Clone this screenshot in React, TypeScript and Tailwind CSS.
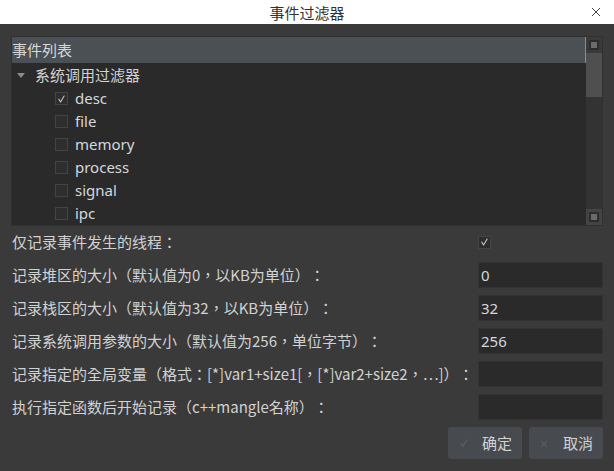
import React from 'react';

const font = { fontFamily: '"Noto Sans", "Noto Sans CJK TC", sans-serif' };
const cjkFont = { fontFamily: '"Noto Sans CJK TC", "Noto Sans", sans-serif' };

const events = [
  { name: 'desc', checked: true },
  { name: 'file', checked: false },
  { name: 'memory', checked: false },
  { name: 'process', checked: false },
  { name: 'signal', checked: false },
  { name: 'ipc', checked: false },
];

const fields = [
  { label: '记录堆区的大小（默认值为0，以KB为单位）：', value: '0' },
  { label: '记录栈区的大小（默认值为32，以KB为单位）：', value: '32' },
  { label: '记录系统调用参数的大小（默认值为256，单位字节）：', value: '256' },
  { label: '记录指定的全局变量（格式：[*]var1+size1[，[*]var2+size2，⋯]）：', value: '' },
  { label: '执行指定函数后开始记录（c++mangle名称）：', value: '' },
];

function CheckMark({ className }: { className?: string }) {
  return (
    <svg viewBox="0 0 13 13" className={className} fill="none">
      <path d="M3.2 6.6 L5.4 10 L9.6 3" stroke="currentColor" strokeWidth="1.2" strokeLinecap="round" strokeLinejoin="round" />
    </svg>
  );
}

function Checkbox({ checked }: { checked: boolean }) {
  return (
    <div className="w-[13px] h-[13px] bg-[#2e2e2e] border border-[#444] flex items-center justify-center text-[#cfcfcf]">
      {checked && <CheckMark className="w-[12px] h-[12px]" />}
    </div>
  );
}

function ScrollButton() {
  return (
    <div className="h-[16px] flex items-center justify-center">
      <div className="w-[10px] h-[10px] bg-[#2d2d2d] flex items-center justify-center">
        <div className="w-[6px] h-[6px] bg-[#6b6b6b]" />
      </div>
    </div>
  );
}

export default function App() {
  return (
    <div className="w-[614px] h-[471px] flex flex-col overflow-hidden [text-spacing-trim:space-all]" style={font}>
      {/* title bar */}
      <div className="h-[24px] bg-white grid grid-cols-[1fr_auto_1fr] items-center">
        <div />
        <div className="text-[15px] text-[#303030] leading-none" style={cjkFont}>事件过滤器</div>
        <div className="justify-self-end pr-[13px] text-[#444]">
          <svg viewBox="0 0 10 10" className="w-[10px] h-[10px]">
            <path d="M1 1 L9 9 M9 1 L1 9" stroke="currentColor" strokeWidth="1" />
          </svg>
        </div>
      </div>

      <div className="flex-1 bg-[#3a3a3a] px-[11px] pt-[12px] text-[#d2d2d2]">
        {/* event tree */}
        <div className="h-[190px] border border-[#303030] flex bg-[#2a2a2a]">
          <div className="flex-1 flex flex-col">
            <div className="h-[27px] bg-[#4b5054] border-r border-[#8a8d90] flex items-center text-[15px] text-[#d8d8d8]" style={cjkFont}>
              事件列表
            </div>
            <div className="pt-[1px]">
              <div className="h-[23px] flex items-center text-[15px]" style={cjkFont}>
                <svg viewBox="0 0 8 5" className="w-[8px] h-[5px] ml-[5px] mr-[10px] text-[#8c8c8c]">
                  <path d="M0 0 L8 0 L4 5 Z" fill="currentColor" />
                </svg>
                系统调用过滤器
              </div>
              {events.map((ev) => (
                <div key={ev.name} className="h-[23px] flex items-center pl-[43px] gap-[7px] text-[15px] text-[#d4d8dc]">
                  <Checkbox checked={ev.checked} />
                  <span>{ev.name}</span>
                </div>
              ))}
            </div>
          </div>
          <div className="w-[16px] flex flex-col bg-[#333333]">
            <div className="bg-[#3a3a3a]">
              <ScrollButton />
            </div>
            <div className="h-[44px] bg-[#4f4f4f]" />
            <div className="flex-1" />
            <div className="bg-[#444444]">
              <ScrollButton />
            </div>
          </div>
        </div>

        {/* options */}
        <div className="mt-[3px] flex flex-col gap-[7px] pl-[1px]">
          <div className="h-[26px] flex items-center">
            <div className="flex-1 text-[15px]" style={cjkFont}>仅记录事件发生的线程：</div>
            <div className="w-[125px]">
              <Checkbox checked={true} />
            </div>
          </div>
          {fields.map((f) => (
            <div key={f.label} className="h-[26px] flex items-center">
              <div className="flex-1 text-[15px] whitespace-nowrap" style={cjkFont}>{f.label}</div>
              <div className="w-[125px] h-[26px] bg-[#2a2a2a] border border-[#333] flex items-center pl-[2px] text-[15px] text-[#d4d8dc]">
                {f.value}
              </div>
            </div>
          ))}
          <div className="flex justify-end gap-[7px]">
            <button className="w-[74px] h-[32px] rounded-[3px] bg-[#474b4f] flex items-center justify-center gap-[12px] text-[15px] text-[#d2d2d2]" style={cjkFont}>
              <CheckMark className="w-[12px] h-[12px] text-[#5c6166]" />
              确定
            </button>
            <button className="w-[74px] h-[32px] rounded-[3px] bg-[#474b4f] flex items-center justify-center gap-[14px] text-[15px] text-[#d2d2d2]" style={cjkFont}>
              <span className="text-[10px] text-[#62676c]">×</span>
              取消
            </button>
          </div>
        </div>
      </div>
    </div>
  );
}
